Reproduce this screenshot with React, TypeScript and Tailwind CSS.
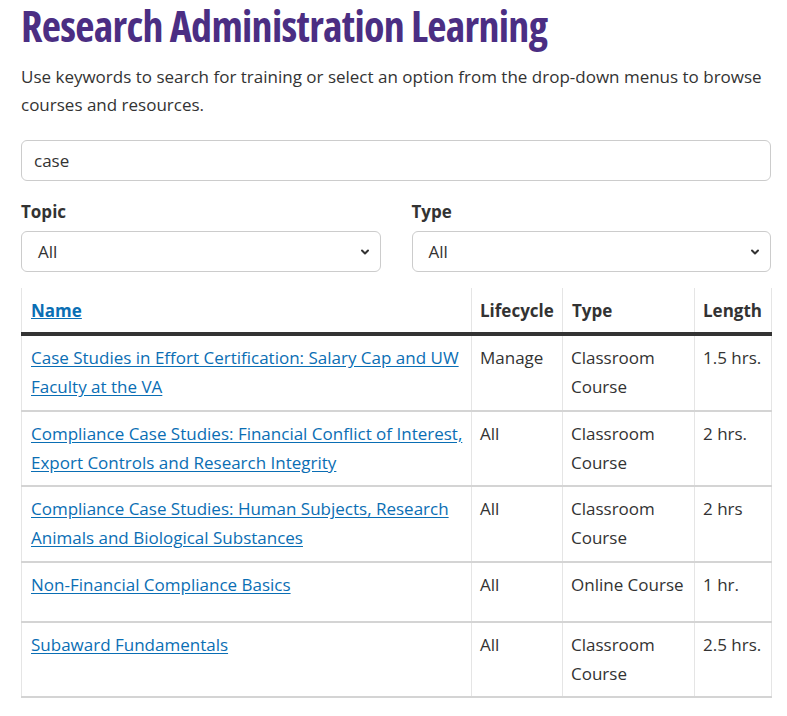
import { ChevronDown } from "lucide-react";

const courses = [
  {
    name: "Case Studies in Effort Certification: Salary Cap and UW Faculty at the VA",
    lifecycle: "Manage",
    type: "Classroom Course",
    length: "1.5 hrs.",
  },
  {
    name: "Compliance Case Studies: Financial Conflict of Interest, Export Controls and Research Integrity",
    lifecycle: "All",
    type: "Classroom Course",
    length: "2 hrs.",
  },
  {
    name: "Compliance Case Studies: Human Subjects, Research Animals and Biological Substances",
    lifecycle: "All",
    type: "Classroom Course",
    length: "2 hrs",
  },
  {
    name: "Non-Financial Compliance Basics",
    lifecycle: "All",
    type: "Online Course",
    length: "1 hr.",
    tall: true,
  },
  {
    name: "Subaward Fundamentals",
    lifecycle: "All",
    type: "Classroom Course",
    length: "2.5 hrs.",
  },
];

function Select({ label }: { label: string }) {
  return (
    <div className="flex flex-col">
      <label className="font-bold text-[17px] leading-[24px] text-[#333]">{label}</label>
      <div className="mt-[7px] h-[41px] border border-[#ccc] rounded-[6px] flex items-center justify-between pl-[16px] pr-[9px] text-[#333]">
        <span>All</span>
        <ChevronDown className="w-[12px] h-[12px]" strokeWidth={4} />
      </div>
    </div>
  );
}

export default function App() {
  return (
    <div className="bg-white min-h-[716px] font-['Open_Sans',sans-serif] text-[17px] text-[#333]">
      <div className="ml-[21px] w-[750px]">
        <h1 className="pt-[1px] text-[42px] leading-[50px] font-bold font-stretch-condensed tracking-[-0.7px] text-[#4b2e83]">
          Research Administration Learning
        </h1>
        <p className="mt-[12px] leading-[28px] text-[#333]">
          Use keywords to search for training or select an option from the drop-down menus to browse courses and resources.
        </p>
        <div className="mt-[21px] h-[41px] border border-[#ccc] rounded-[6px] flex items-center px-[12px]">
          case
        </div>
        <div className="mt-[19px] grid grid-cols-2 gap-[31px]">
          <Select label="Topic" />
          <Select label="Type" />
        </div>
        <table className="mt-[16px] w-full border-collapse table-fixed">
          <colgroup>
            <col className="w-[450px]" />
            <col className="w-[91px]" />
            <col className="w-[132px]" />
            <col className="w-[77px]" />
          </colgroup>
          <thead>
            <tr className="border-b-[4px] border-[#333]">
              <th className="text-left font-bold px-[9px] pt-[8px] pb-[7px] leading-[29px] border-l border-[#e5e5e5]">
                <a className="text-[#0a6eb4] underline">Name</a>
              </th>
              <th className="text-left font-bold pl-[8px] pr-[0px] pt-[8px] pb-[7px] leading-[29px] border-l border-[#e5e5e5]">Lifecycle</th>
              <th className="text-left font-bold px-[9px] pt-[8px] pb-[7px] leading-[29px] border-l border-[#e5e5e5]">Type</th>
              <th className="text-left font-bold px-[8px] pt-[8px] pb-[7px] leading-[29px] border-l border-r border-[#e5e5e5]">Length</th>
            </tr>
          </thead>
          <tbody>
            {courses.map((c) => {
              const pad = c.tall ? "pt-[7px] pb-[22px]" : "pt-[7px] pb-[8.5px]";
              return (
                <tr key={c.name} className="border-b-2 border-[#d4d4d4] align-top leading-[29px]">
                  <td className={`pl-[9px] pr-[2px] border-l border-[#e5e5e5] ${pad}`}>
                    <a className="text-[#0a6eb4] underline underline-offset-[2px]">{c.name}</a>
                  </td>
                  <td className={`px-[8px] border-l border-[#e5e5e5] ${pad}`}>{c.lifecycle}</td>
                  <td className={`px-[8px] border-l border-[#e5e5e5] ${pad}`}>{c.type}</td>
                  <td className={`px-[8px] border-l border-r border-[#e5e5e5] ${pad}`}>{c.length}</td>
                </tr>
              );
            })}
          </tbody>
        </table>
      </div>
    </div>
  );
}
